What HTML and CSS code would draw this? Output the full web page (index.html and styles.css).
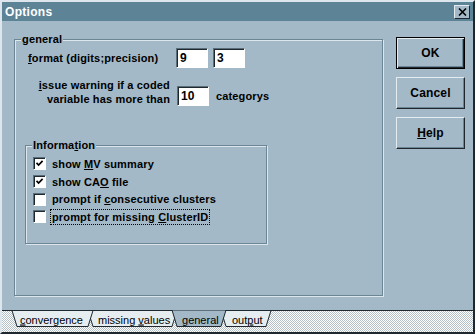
FILE: index.html
```html
<!DOCTYPE html>
<html lang="en">
<head>
    <meta charset="UTF-8">
    <title>Options</title>
    <link rel="stylesheet" href="styles.css">
</head>
<body>
    <div class="window">
        <div class="titlebar">
            <span class="title">Options</span>
            <span class="close">
                <svg width="9" height="8" viewBox="0 0 9 8"><path d="M1 0.5 L8 7.5 M8 0.5 L1 7.5" stroke="#000" stroke-width="1.6"/></svg>
            </span>
        </div>
        <div class="main">
            <fieldset class="group general">
                <legend><u>g</u>eneral</legend>
                <div class="row-format">
                    <span class="label-format"><u>f</u>ormat (digits;precision)</span>
                    <span class="field">9</span>
                    <span class="field">3</span>
                </div>
                <div class="row-warn">
                    <span class="label-warn"><u>i</u>ssue warning if a coded<br>variable has more than</span>
                    <span class="field">10</span>
                    <span class="unit">categorys</span>
                </div>
                <fieldset class="group info">
                    <legend>Informa<u>t</u>ion</legend>
                    <div class="check">
                        <span class="box"><svg width="9" height="9" viewBox="0 0 9 9"><path d="M1.5 3.8 L3.6 6 L7.6 1.8" fill="none" stroke="#000" stroke-width="1.7"/></svg></span>
                        <span class="text">show <u>M</u>V summary</span>
                    </div>
                    <div class="check">
                        <span class="box"><svg width="9" height="9" viewBox="0 0 9 9"><path d="M1.5 3.8 L3.6 6 L7.6 1.8" fill="none" stroke="#000" stroke-width="1.7"/></svg></span>
                        <span class="text">show CA<u>O</u> file</span>
                    </div>
                    <div class="check">
                        <span class="box"></span>
                        <span class="text">prompt if <u>c</u>onsecutive clusters</span>
                    </div>
                    <div class="check">
                        <span class="box"></span>
                        <span class="text focus">prompt for missing <u>C</u>lusterID</span>
                    </div>
                </fieldset>
            </fieldset>
            <div class="buttons">
                <div class="btn default">OK</div>
                <div class="btn">Cancel</div>
                <div class="btn"><u>H</u>elp</div>
            </div>
        </div>
        <div class="tabbar">
            <svg width="471" height="22" viewBox="0 0 471 22">
                <line x1="0" y1="0.5" x2="471" y2="0.5" stroke="#1e282e"/>
                <polygon class="tab" points="219,0.5 224,16.5 264,16.5 269,0.5"/>
                <polygon class="tab" points="86,0.5 91,16.5 170,16.5 175,0.5"/>
                <polygon class="tab" points="10,0.5 15,16.5 86,16.5 91,0.5"/>
                <polygon class="tab active" points="170,0 175,16.5 219,16.5 224,0"/>
                <text x="18" y="13.5"><tspan text-decoration="underline">c</tspan>onvergence</text>
                <text x="96" y="13.5">missing <tspan text-decoration="underline">v</tspan>alues</text>
                <text x="180" y="13.5"><tspan text-decoration="underline">g</tspan>eneral</text>
                <text x="230" y="13.5">out<tspan text-decoration="underline">p</tspan>ut</text>
            </svg>
        </div>
    </div>
</body>
</html>
```

FILE: styles.css
```css
body { margin: 0; font-family: "Liberation Sans", Arial, sans-serif; font-size: 11px; font-weight: bold; letter-spacing: 0.15px; color: #000; }

.window {
    width: 475px;
    height: 334px;
    box-sizing: border-box;
    display: flex;
    flex-direction: column;
    background-color: #a3b9c7;
    border: 2px solid;
    border-color: #dce6ec #1e282e #1e282e #dce6ec;
}

/* title bar */
.titlebar {
    height: 19px;
    display: flex;
    align-items: center;
    justify-content: space-between;
    padding: 0 3px 0 3px;
    background-color: #5d8397;
}
.title { color: #fff; font-size: 12px; letter-spacing: 0.3px; }
.close {
    width: 14px;
    height: 12px;
    display: flex;
    align-items: center;
    justify-content: center;
    background-color: #a3b9c7;
    border: 1px solid;
    border-color: #e4ecf0 #1e282e #1e282e #e4ecf0;
}

/* main area */
.main { flex: 1; display: flex; align-items: flex-start; padding: 12px 0 0 12px; }

.group {
    margin: 0;
    padding: 0;
    border: 1px solid #6c8696;
    box-shadow: 1px 1px 0 #dce6ec, inset 1px 1px 0 #dce6ec;
}
.group legend { margin-left: 6px; padding: 0 1px; background-color: #a3b9c7; line-height: 13px; }

.general { width: 369px; height: 263px; box-sizing: border-box; }

.row-format { display: flex; align-items: center; margin: 2px 0 0 13px; }
.label-format { width: 148px; }
.field {
    width: 32px;
    height: 20px;
    box-sizing: border-box;
    display: flex;
    align-items: center;
    padding-left: 3px;
    margin-right: 5px;
    background-color: #fff;
    border: 1px solid;
    border-color: #5a6e7a #fff #fff #5a6e7a;
    box-shadow: inset 1px 1px 0 #1e282e;
    font-size: 12px;
}

.row-warn { display: flex; align-items: flex-end; margin: 10px 0 0 13px; }
.label-warn { width: 142px; text-align: right; line-height: 14px; margin-right: 7px; }
.row-warn .field { margin-right: 7px; }
.unit { line-height: 20px; }

.info { width: 242px; height: 105px; box-sizing: border-box; margin: 33px 0 0 10px; }
.info legend { margin-left: 6px; }

.check { display: flex; align-items: center; height: 17.7px; margin-left: 7px; }
.check:first-of-type { margin-top: 3px; }
.box {
    width: 13px;
    height: 13px;
    box-sizing: border-box;
    display: flex;
    align-items: center;
    justify-content: center;
    margin-right: 6px;
    background-color: #fff;
    border: 1px solid;
    border-color: #5a6e7a #fff #fff #5a6e7a;
    box-shadow: inset 1px 1px 0 #1e282e;
}
.focus { outline: 1px dotted #000; outline-offset: 1px; }

/* buttons */
.buttons { display: flex; flex-direction: column; gap: 8px; margin: 4px 0 0 13px; }
.btn {
    width: 69px;
    height: 32px;
    box-sizing: border-box;
    display: flex;
    align-items: center;
    justify-content: center;
    font-size: 12px;
    border: 1px solid;
    border-color: #e4ecf0 #1e282e #1e282e #e4ecf0;
    box-shadow: inset -1px -1px 0 #6c8696;
}
.btn.default {
    border-color: #000;
    box-shadow: inset 1px 1px 0 #e4ecf0, inset -1px -1px 0 #1e282e, inset -2px -2px 0 #6c8696;
}

/* sheet tabs */
.tabbar {
    height: 22px;
    background: repeating-conic-gradient(#ffffff 0 25%, #b4c0c8 0 50%) 0 0 / 2px 2px;
}
.tabbar svg { display: block; }
.tab { fill: #e6edf1; stroke: #1e282e; stroke-width: 1; }
.tab.active { fill: #a3b9c7; }
.tabbar text { font-family: "Liberation Sans", Arial, sans-serif; font-size: 11px; font-weight: normal; letter-spacing: 0; fill: #000; }
```
